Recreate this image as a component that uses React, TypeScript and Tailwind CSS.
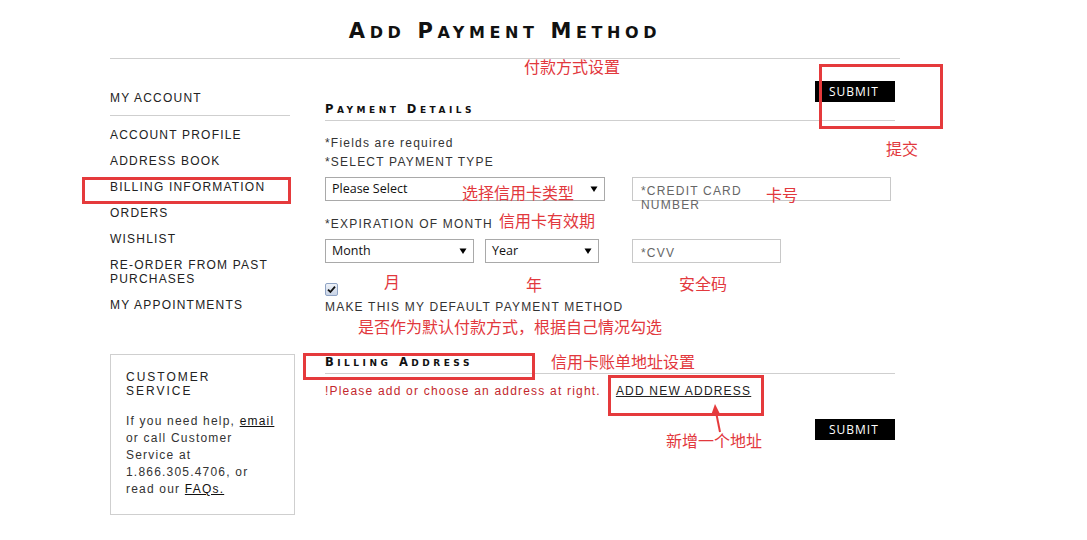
import React from "react";

const SANS = "font-['Liberation_Sans',Arial,sans-serif]";

function SmallCaps({ text, big, small, className }: { text: string; big: string; small: string; className?: string }) {
  const words = text.split(" ");
  return (
    <span className={className}>
      {words.map((w, i) => (
        <React.Fragment key={i}>
          {i > 0 && <span className={big}> </span>}
          <span className={big}>{w[0]}</span>
          <span className={small}>{w.slice(1).toUpperCase()}</span>
        </React.Fragment>
      ))}
    </span>
  );
}

function Arrow() {
  return (
    <svg width="8" height="8" viewBox="0 0 8 8" className="shrink-0">
      <path d="M0.5 1.5 L7.5 1.5 L4 7 Z" fill="#000" />
    </svg>
  );
}

function SelectBox({ label, w }: { label: string; w: string }) {
  return (
    <div className={`${w} h-[24px] border border-[#a9a9a9] bg-white flex items-center justify-between pl-[6px] pr-[6px] font-['Open_Sans',sans-serif] text-[12.5px] text-[#111]`}>
      <span className="pt-[1px]">{label}</span>
      <Arrow />
    </div>
  );
}

function TextBox({ label, w, labelW }: { label: string; w: string; labelW: string }) {
  return (
    <div className={`${w} h-[24px] border border-[#c8c8c8] bg-white pl-[8px] pt-[6px]`}>
      <div className={`${labelW} text-[12px] leading-[14px] tracking-[1.2px] text-[#666] ${SANS}`}>{label}</div>
    </div>
  );
}

function SubmitBtn() {
  return (
    <div className="w-[80px] h-[21px] bg-black text-white flex items-center pl-[14px] font-['Open_Sans',sans-serif] font-medium text-[12px] tracking-[1px] leading-none">
      SUBMIT
    </div>
  );
}

function SectionHeading({ text }: { text: string }) {
  return (
    <div className="h-[20px] border-b border-[#cfcfcf] leading-[14px] -mt-[1px]">
      <SmallCaps
        text={text}
        big="text-[11.5px]"
        small="text-[9px]"
        className="font-['DejaVu_Sans',sans-serif] font-bold tracking-[3.5px] text-[#111]"
      />
    </div>
  );
}

const navItems = [
  "ACCOUNT PROFILE",
  "ADDRESS BOOK",
  "BILLING INFORMATION",
  "ORDERS",
  "WISHLIST",
  "RE-ORDER FROM PAST PURCHASES",
  "MY APPOINTMENTS",
];

const RED_T = "text-[#e2383d]";
const CJK = "font-['Noto_Sans_CJK_SC',sans-serif] text-[16px] leading-[16px] whitespace-nowrap";

function Note({ x, y, text }: { x: number; y: number; text: string }) {
  return (
    <div className={`absolute ${CJK} ${RED_T}`} style={{ left: x, top: y - 8 }}>
      {text}
    </div>
  );
}

function RedBox({ x, y, w, h }: { x: number; y: number; w: number; h: number }) {
  return <div className="absolute border-[3px] border-[#e53a3c]" style={{ left: x, top: y, width: w, height: h }} />;
}

export default function App() {
  return (
    <div className={`relative w-[1087px] h-[540px] bg-white overflow-hidden ${SANS}`}>
      <div className="ml-[110px] w-[790px]">
        {/* Header */}
        <div className="h-[59px] border-b border-[#cfcfcf] flex justify-center pt-[19px]">
          <SmallCaps
            text="Add Payment Method"
            big="text-[21px]"
            small="text-[16px]"
            className="font-['DejaVu_Sans',sans-serif] font-bold tracking-[4.6px] leading-[24px] text-[#111]"
          />
        </div>

        <div className="flex">
          {/* Left column */}
          <div className="w-[185px] shrink-0 pt-[32px]">
            <div className="w-[180px] border-b border-[#cfcfcf] pb-[10px] text-[12px] leading-[14px] tracking-[1.2px] text-[#222]">
              MY ACCOUNT
            </div>
            <div className="pt-[12px] flex flex-col gap-[12px] text-[12px] leading-[14px] tracking-[1.2px] text-[#222]">
              {navItems.map((n) => (
                <div key={n} className="w-[170px]">
                  {n}
                </div>
              ))}
            </div>
            <div className="mt-[42px] w-[185px] h-[161px] border border-[#cfcfcf] pl-[15px] pt-[15px]">
              <div className="text-[12px] leading-[14px] tracking-[2px] text-[#222]">
                CUSTOMER
                <br />
                SERVICE
              </div>
              <div className="mt-[15px] text-[12px] leading-[17px] tracking-[1.2px] text-[#333]">
                If you need help, <span className="underline text-[#111]">email</span>
                <br />
                or call Customer
                <br />
                Service at
                <br />
                1.866.305.4706, or
                <br />
                read our <span className="underline text-[#111]">FAQs.</span>
              </div>
            </div>
          </div>

          {/* Main column */}
          <div className="ml-[30px] w-[570px]">
            <div className="flex justify-end pt-[22px]">
              <SubmitBtn />
            </div>
            <SectionHeading text="Payment Details" />

            <div className="mt-[15px] text-[12px] leading-[14px] tracking-[1.2px] text-[#333]">*Fields are required</div>
            <div className="mt-[5px] text-[12px] leading-[14px] tracking-[1.2px] text-[#333]">*SELECT PAYMENT TYPE</div>

            <div className="mt-[8px] flex gap-[27px]">
              <SelectBox label="Please Select" w="w-[280px]" />
              <TextBox label="*CREDIT CARD NUMBER" w="w-[259px]" labelW="w-[130px]" />
            </div>

            <div className="mt-[16px] text-[12px] leading-[14px] tracking-[1.2px] text-[#333]">*EXPIRATION OF MONTH</div>

            <div className="mt-[8px] flex gap-[27px]">
              <div className="w-[280px] flex gap-[11px]">
                <SelectBox label="Month" w="w-[149px]" />
                <SelectBox label="Year" w="w-[114px]" />
              </div>
              <TextBox label="*CVV" w="w-[149px]" labelW="w-[130px]" />
            </div>

            <div className="mt-[20px] w-[13px] h-[13px] border border-[#8fa3c4] rounded-[2px] bg-gradient-to-b from-[#eef2f8] to-[#c9d4e6] flex items-center justify-center">
              <svg width="9" height="9" viewBox="0 0 9 9">
                <path d="M1 4.6 L3.4 7 L8 1.6" stroke="#111" strokeWidth="1.8" fill="none" />
              </svg>
            </div>
            <div className="mt-[4px] text-[12px] leading-[14px] tracking-[1.2px] text-[#333]">MAKE THIS MY DEFAULT PAYMENT METHOD</div>

            <div className="mt-[41px]">
              <SectionHeading text="Billing Address" />
            </div>

            <div className="mt-[10px] flex text-[12px] leading-[14px] tracking-[1.2px]">
              <span className="text-[#c3282d]">!Please add or choose an address at right.</span>
              <span className="ml-[15px] underline text-[#222]">ADD NEW ADDRESS</span>
            </div>

            <div className="mt-[21px] flex justify-end">
              <SubmitBtn />
            </div>
          </div>
        </div>
      </div>

      {/* Annotations */}
      <RedBox x={819} y={64} w={124} h={65} />
      <RedBox x={82} y={177} w={209} h={27} />
      <RedBox x={303} y={353} w={232} h={27} />
      <RedBox x={608} y={375} w={156} h={41} />

      <svg className="absolute left-0 top-0" width="1087" height="540">
        <line x1="720" y1="432" x2="716" y2="412" stroke="#e53a3c" strokeWidth="2" />
        <path d="M715 404 L711.5 414 L719.5 413 Z" fill="#e53a3c" />
      </svg>

      <Note x={524} y={66} text="付款方式设置" />
      <Note x={886} y={148} text="提交" />
      <Note x={462} y={192} text="选择信用卡类型" />
      <Note x={766} y={194} text="卡号" />
      <Note x={499} y={220} text="信用卡有效期" />
      <Note x={384} y={281} text="月" />
      <Note x={526} y={284} text="年" />
      <Note x={679} y={283} text="安全码" />
      <Note x={358} y={326} text="是否作为默认付款方式，根据自己情况勾选" />
      <Note x={551} y={361} text="信用卡账单地址设置" />
      <Note x={666} y={440} text="新增一个地址" />
    </div>
  );
}
